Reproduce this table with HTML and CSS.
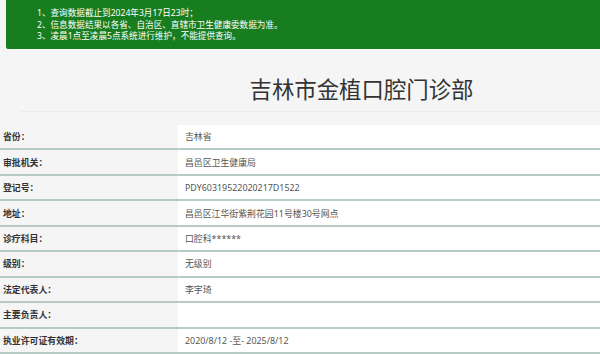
FILE: index.html
```html
<!DOCTYPE html>
<html lang="zh-CN">
<head>
<meta charset="utf-8">
<title>吉林市金植口腔门诊部</title>
<link rel="stylesheet" href="styles.css">
</head>
<body>
<div class="notice">
  <p>1、查询数据截止到2024年3月17日23时；</p>
  <p>2、信息数据结果以各省、自治区、直辖市卫生健康委数据为准。</p>
  <p>3、凌晨1点至凌晨5点系统进行维护，不能提供查询。</p>
</div>
<div class="header">
  <h1 class="title">吉林市金植口腔门诊部</h1>
</div>
<div class="info">
  <div class="row"><div class="label">省份：</div><div class="value">吉林省</div></div>
  <div class="row"><div class="label">审批机关：</div><div class="value">昌邑区卫生健康局</div></div>
  <div class="row"><div class="label">登记号：</div><div class="value">PDY60319522020217D1522</div></div>
  <div class="row"><div class="label">地址：</div><div class="value">昌邑区江华街紫荆花园11号楼30号网点</div></div>
  <div class="row"><div class="label">诊疗科目：</div><div class="value">口腔科******</div></div>
  <div class="row"><div class="label">级别：</div><div class="value">无级别</div></div>
  <div class="row"><div class="label">法定代表人：</div><div class="value">李宇琦</div></div>
  <div class="row"><div class="label">主要负责人：</div><div class="value"></div></div>
  <div class="row"><div class="label">执业许可证有效期：</div><div class="value">2020/8/12 -至- 2025/8/12</div></div>
</div>
</body>
</html>
```
FILE: styles.css
```css
html, body {
  margin: 0;
  padding: 0;
  background: #f5f5f5;
  font-family: "Noto Sans", "Noto Sans CJK SC", sans-serif;
  font-size: 8.9px;
  color: #555;
}

.notice {
  margin-left: 6px;
  height: 50px;
  box-sizing: border-box;
  padding: 8px 0 0 31px;
  background: #187d1e;
  color: #fff;
  border-bottom-left-radius: 3px;
  border-bottom: 1px solid #fbfbfb;
}

.notice p {
  margin: 0;
  line-height: 11.5px;
  font-size: 8.6px;
}

.header {
  height: 62px;
  box-sizing: border-box;
  padding: 23px 0 0 123px;
  border-bottom: 1px solid #ececec;
  margin-left: 20px;
}

.title {
  margin: 0 0 0 -20px;
  text-align: center;
  font-size: 22.4px;
  font-weight: normal;
  line-height: 33px;
  color: #333;
}

.info {
  margin-top: 13px;
}

.row {
  display: flex;
  height: 25.45px;
  box-sizing: border-box;
  border-bottom: 2px solid #b5cbc3;
}

.label {
  width: 178px;
  flex: none;
  box-sizing: border-box;
  padding-left: 3px;
  display: flex;
  align-items: center;
  font-weight: bold;
  color: #333;
}

.value {
  flex: 1;
  background: #fff;
  padding-left: 7px;
  display: flex;
  align-items: center;
  color: #555;
}
```
